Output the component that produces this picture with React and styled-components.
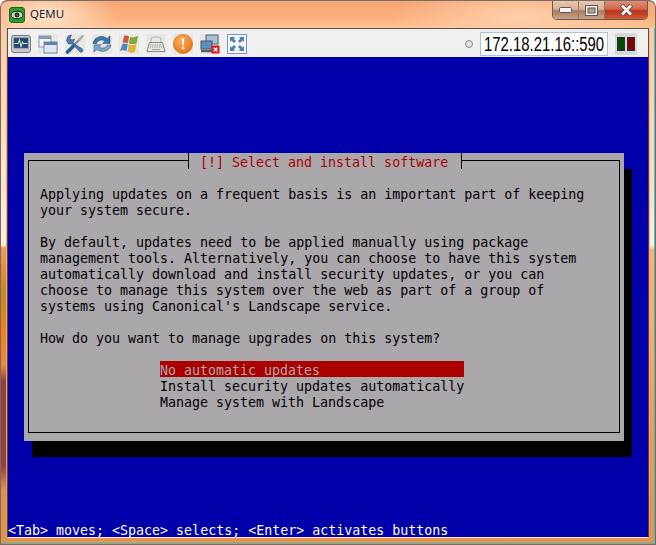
import React from "react";
import styled, { createGlobalStyle } from "styled-components";

const GlobalStyle = createGlobalStyle`
  html, body {
    margin: 0;
    padding: 0;
    background: #fff;
  }
`;

const LINES = [
  "Applying updates on a frequent basis is an important part of keeping",
  "your system secure.",
  "",
  "By default, updates need to be applied manually using package",
  "management tools. Alternatively, you can choose to have this system",
  "automatically download and install security updates, or you can",
  "choose to manage this system over the web as part of a group of",
  "systems using Canonical's Landscape service.",
  "",
  "How do you want to manage upgrades on this system?",
];

const OPTIONS = [
  "No automatic updates",
  "Install security updates automatically",
  "Manage system with Landscape",
];

export default function App() {
  return (
    <>
      <GlobalStyle />
      <Win>
        <TitleBar>
          <AppIcon>
            <svg width="16" height="16" viewBox="0 0 16 16">
              <rect x="0.5" y="0.5" width="15" height="15" rx="2.5" fill="#2f9a2c" stroke="#176a1c" />
              <ellipse cx="8" cy="8" rx="6" ry="3.8" fill="#c6d6c2" stroke="#16261c" strokeWidth="1" />
              <circle cx="8" cy="8" r="2.4" fill="#1b2a22" />
              <circle cx="8" cy="8" r="0.8" fill="#8a9a8c" />
            </svg>
          </AppIcon>
          <AppName>QEMU</AppName>
          <Caption>
            <CaptionButton>
              <svg width="13" height="6" viewBox="0 0 13 6">
                <rect x="0.5" y="0.5" width="12" height="5" rx="1" fill="#f2f3f6" stroke="#5c5a60" />
              </svg>
            </CaptionButton>
            <CaptionButton>
              <svg width="13" height="11" viewBox="0 0 13 11">
                <rect x="0.5" y="0.5" width="12" height="10" fill="#eef0f4" stroke="#5c5a60" />
                <rect x="3" y="3" width="7" height="5" fill="#c89c78" stroke="#5c5a60" />
              </svg>
            </CaptionButton>
            <CloseButton>
              <svg width="15" height="12" viewBox="0 0 15 12">
                <path d="M2.5 1 L12.5 11 M12.5 1 L2.5 11" stroke="#6c4a48" strokeWidth="4.4" />
                <path d="M3 1.5 L12 10.5 M12 1.5 L3 10.5" stroke="#f6f6f6" strokeWidth="2.6" />
              </svg>
            </CloseButton>
          </Caption>
        </TitleBar>
        <Toolbar>
          <IconGroup>
            <ToolIcon>
              <svg width="20" height="20" viewBox="0 0 20 20">
                <rect x="0.5" y="1.5" width="19" height="17" rx="2.5" fill="#c4c8cc" stroke="#7c8084" />
                <rect x="3" y="4" width="14" height="10" fill="#1f4a80" stroke="#4c5660" strokeWidth="0.6" />
                <path d="M3.5 9.5 H7 L8.5 6 L10 12.5 L11.5 8 L12.5 9.5 H16.5" fill="none" stroke="#d8e49a" strokeWidth="1.1" />
              </svg>
            </ToolIcon>
            <ToolIcon>
              <svg width="20" height="20" viewBox="0 0 20 20">
                <rect x="1" y="2" width="12" height="11" fill="#f2f4f6" stroke="#8a96a4" />
                <rect x="1" y="2" width="12" height="3" fill="#7c9cc0" />
                <rect x="6" y="8" width="13" height="11" fill="#dfe6ee" stroke="#76869a" />
                <rect x="6" y="8" width="13" height="3" fill="#5c84b0" />
              </svg>
            </ToolIcon>
            <ToolIcon>
              <svg width="20" height="20" viewBox="0 0 20 20">
                <path d="M7 13 L15 5" stroke="#8a949c" strokeWidth="2.4" />
                <path d="M14 6 L18 1.5" stroke="#a4acb4" strokeWidth="2.4" />
                <path d="M1.5 6.5 L3 2 L6.5 1 L5 4.5 L7 6 L9.5 5 L8 9 L17.5 15 A2 2 0 0 1 15 18 L7.5 10 L3.5 10 Z" fill="#4c7aa8" stroke="#2c5480" strokeWidth="0.6" />
                <path d="M2.5 18 L8 12.5" stroke="#2d5c90" strokeWidth="3.6" strokeLinecap="round" />
              </svg>
            </ToolIcon>
            <ToolIcon>
              <svg width="20" height="20" viewBox="0 0 20 20">
                <path d="M1 9.5 C2 3 10 0.5 15 4.5 L18 2 V9.5 H10.5 L13 7.2 C10 5 5.5 6 4.8 9.5 Z" fill="#3c78ac" stroke="#2a5480" strokeWidth="0.6" />
                <path d="M19 11 C18 17 10 19.5 5 15.5 L2 18 V10.8 H9.5 L7 13 C10 15 14.5 14 15.2 11 Z" fill="#7ca4c8" stroke="#3c6a96" strokeWidth="0.6" />
              </svg>
            </ToolIcon>
            <ToolIcon>
              <svg width="20" height="20" viewBox="0 0 20 20">
                <path d="M5 2 C7 1 8 2 10 2.4 L9 9 C7 8.4 5.5 8 3.6 9 Z" fill="#c8583c" />
                <path d="M11 3 C13.5 3.8 16 3.4 19 2 L17.6 9.4 C15 10.4 12.2 10.2 10 9.4 Z" fill="#7ca83c" />
                <path d="M3.4 10 C5.5 9 7 9.4 8.8 10 L7.6 17 C5.6 16.2 3.4 16 1 17 Z" fill="#4c86c8" />
                <path d="M9.8 10.4 C12 11.2 14.6 11.2 17.4 10.2 L16 18 C13.4 19 11 19 8.6 17.6 Z" fill="#dcb43c" />
              </svg>
            </ToolIcon>
            <ToolIcon>
              <svg width="20" height="20" viewBox="0 0 20 20">
                <path d="M5 9 V5 C5 3 8 3 10 3 S15 3 15 5 V9" fill="none" stroke="#b0b0ac" />
                <path d="M3.5 8.5 H16.5 L19 17.5 H1 Z" fill="#e8e8e4" stroke="#8c8c88" />
                <path d="M4 11 H16 M3.5 13 H16.5" stroke="#9c9c98" strokeDasharray="1.5 0.8" strokeWidth="1.2" />
                <path d="M6 15.5 H14" stroke="#9c9c98" strokeWidth="1.2" />
              </svg>
            </ToolIcon>
            <ToolIcon>
              <svg width="20" height="20" viewBox="0 0 20 20">
                <defs>
                  <radialGradient id="warn" cx="0.4" cy="0.3" r="0.8">
                    <stop offset="0" stopColor="#fbb060" />
                    <stop offset="1" stopColor="#e86a10" />
                  </radialGradient>
                </defs>
                <circle cx="10" cy="10" r="9.6" fill="url(#warn)" stroke="#d0650f" strokeWidth="0.6" />
                <path d="M8.8 4 H11.2 L10.8 11.5 H9.2 Z" fill="#fff6e8" />
                <circle cx="10" cy="14.2" r="1.4" fill="#fff6e8" />
              </svg>
            </ToolIcon>
            <ToolIcon>
              <svg width="20" height="20" viewBox="0 0 20 20">
                <rect x="6" y="1" width="12" height="9" fill="#a8c0d8" stroke="#555e68" />
                <rect x="1" y="7" width="11" height="8" fill="#5c90c0" stroke="#4c5660" />
                <path d="M1 17 H12" stroke="#555e68" strokeWidth="2.4" />
                <rect x="11.5" y="11.5" width="8" height="8" fill="#d81c1c" />
                <path d="M13.8 13.8 L17.2 17.2 M17.2 13.8 L13.8 17.2" stroke="#fff" strokeWidth="1.5" />
              </svg>
            </ToolIcon>
            <ToolIcon>
              <svg width="20" height="20" viewBox="0 0 20 20">
                <rect x="0.5" y="0.5" width="19" height="19" fill="#f4f6f8" stroke="#7c94b0" />
                <path d="M3 3 H8 L6.6 4.6 L9 7 L7 9 L4.6 6.6 L3 8 Z" fill="#4c80b4" />
                <path d="M17 3 H12 L13.4 4.6 L11 7 L13 9 L15.4 6.6 L17 8 Z" fill="#4c80b4" />
                <path d="M3 17 H8 L6.6 15.4 L9 13 L7 11 L4.6 13.4 L3 12 Z" fill="#4c80b4" />
                <path d="M17 17 H12 L13.4 15.4 L11 13 L13 11 L15.4 13.4 L17 12 Z" fill="#4c80b4" />
              </svg>
            </ToolIcon>
          </IconGroup>
          <Radio />
          <Address>
            <AddressText>172.18.21.16::590</AddressText>
          </Address>
          <Lights>
            <Light $color="#004c00" />
            <Light $color="#7c0000" />
          </Lights>
        </Toolbar>
        <Console>
          <Dialog>
            <DialogFrame>
              <DialogTitle>[!] Select and install software</DialogTitle>
              <DialogText>{LINES.map((line, i) => <TextLine key={i}>{line}</TextLine>)}</DialogText>
              <Menu>
                {OPTIONS.map((opt, i) => <MenuItem key={opt} $selected={i === 0}>{opt}</MenuItem>)}
              </Menu>
            </DialogFrame>
          </Dialog>
          <StatusLine>{"<Tab> moves; <Space> selects; <Enter> activates buttons"}</StatusLine>
        </Console>
      </Win>
    </>
  );
}

const Win = styled.div`
  box-sizing: border-box;
  width: 656px;
  height: 545px;
  padding: 0 7px 8px 7px;
  border-radius: 7px 7px 0 0;
  background:
    linear-gradient(to bottom, #fcc8a0 0, #fde0c8 140px, #fff0e2 245px, #e8a060 248px, #e88a40 270px, #c08a20 292px, #f08020 335px, #e88a40 365px, #904040 382px, #904040 465px, #e09050 490px, #e0964e 545px) 1px 0 / 5px 100% no-repeat,
    linear-gradient(to bottom, #fcc8a0 0, #fde0c8 190px, #fff0e4 245px, #fdb070 250px, #fcac68 330px, #e89c58 430px, #e0964e 545px) 650px 0 / 5px 100% no-repeat,
    linear-gradient(to bottom, #f8be94 0%, #f4b07c 45%, #e8a468 80%, #e0964e 100%);
  box-shadow: inset 0 0 0 1px #7a6a60, inset -1px -1px 0 1px rgba(64, 184, 208, 0.9);
  display: flex;
  flex-direction: column;
  overflow: hidden;
`;
const TitleBar = styled.div`
  box-sizing: border-box;
  height: 28px;
  margin: 0 -6px;
  padding: 0 7px 0 8px;
  flex: none;
  display: flex;
  align-items: flex-start;
  border-radius: 7px 7px 0 0;
  background:
    radial-gradient(ellipse 70px 30px at 46px 14px, #ffe4cc 0%, rgba(255, 228, 204, 0) 100%),
    radial-gradient(ellipse 130px 30px at 520px 16px, #ffd0ac 0%, rgba(255, 208, 172, 0) 100%),
    linear-gradient(to bottom, #f5a878, #fbb07c 60%, #ffc498);
  border-top: 1px solid #7a6a60;
`;
const AppIcon = styled.div`
  width: 16px;
  height: 16px;
  margin-top: 6px;
  flex: none;
  svg {
    display: block;
  }
`;
const AppName = styled.div`
  margin: 3px 0 0 5px;
  font: 11.5px/20px "Open Sans", sans-serif;
  color: #04101c;
`;
const Caption = styled.div`
  margin-left: auto;
  height: 18px;
  display: flex;
  border: 1px solid #6d5b52;
  border-top: 0;
  border-radius: 0 0 5px 5px;
  overflow: hidden;
`;
const CaptionButton = styled.div`
  width: 25px;
  height: 18px;
  display: flex;
  align-items: center;
  justify-content: center;
  border-right: 1px solid #8c7a6c;
  background: linear-gradient(to bottom, #e8c8ae 0%, #d8b294 45%, #ab7e60 55%, #c9a284 100%);
`;
const CloseButton = styled.div`
  width: 42px;
  height: 18px;
  display: flex;
  align-items: center;
  justify-content: center;
  background: linear-gradient(to bottom, #de9278 0%, #d0664a 45%, #b8331a 55%, #d05c34 100%);
`;
const Toolbar = styled.div`
  box-sizing: border-box;
  height: 29px;
  flex: none;
  display: flex;
  align-items: center;
  padding: 2px 11px 0 3px;
  background: #f0f0f0;
  border: 1px solid #5a5048;
  border-bottom: 0;
`;
const IconGroup = styled.div`
  display: flex;
  gap: 7px;
`;
const ToolIcon = styled.div`
  width: 20px;
  height: 20px;
  background: #e9e8e0;
  svg {
    display: block;
  }
`;
const Radio = styled.div`
  box-sizing: border-box;
  width: 8px;
  height: 8px;
  margin-left: auto;
  border-radius: 50%;
  background: #e4e4e4;
  border: 1px solid #8a8a8a;
`;
const Address = styled.div`
  box-sizing: border-box;
  width: 128px;
  height: 24px;
  margin-left: 7px;
  padding-left: 3px;
  background: #fff;
  border: 1px solid #a9c4dc;
  overflow: hidden;
`;
const AddressText = styled.div`
  font: 20px/22px "Liberation Sans", sans-serif;
  color: #000;
  white-space: pre;
  transform: scaleX(0.745);
  transform-origin: left top;
`;
const Lights = styled.div`
  box-sizing: border-box;
  width: 22px;
  height: 22px;
  margin-left: 7px;
  padding: 4px 2px;
  display: flex;
  gap: 2px;
  background: #d8d8d8;
`;
const Light = styled.div`
  width: 8px;
  background: ${(p) => p.$color};
  border: 1px solid #303030;
  box-sizing: border-box;
`;
const Console = styled.div`
  box-sizing: border-box;
  width: 640px;
  height: 480px;
  margin-left: 1px;
  flex: none;
  display: flex;
  flex-direction: column;
  padding-top: 96px;
  background: #0000aa;
  box-shadow: -1px 0 0 #5a4436, 1px 0 0 #5a4436, 0 1px 0 #fce0c8;
  font: 13.3px/20px "DejaVu Sans Mono", "Liberation Mono", monospace;
  white-space: pre;
`;
const Dialog = styled.div`
  box-sizing: border-box;
  width: 600px;
  height: 288px;
  margin-left: 16px;
  padding: 7px 4px 8px 4px;
  background: #aaa8aa;
  box-shadow: 8px 16px 0 #000;
  color: #000;
`;
const DialogFrame = styled.div`
  box-sizing: border-box;
  height: 100%;
  display: flex;
  flex-direction: column;
  border: 1px solid #000;
  padding-left: 11px;
`;
const DialogTitle = styled.div`
  align-self: flex-start;
  height: 16px;
  margin: -8px 0 0 148px;
  padding: 0 13px 0 11px;
  background: #aaa8aa;
  border-left: 1px solid #000;
  border-right: 1px solid #000;
  color: #aa0000;
`;
const DialogText = styled.div`
  margin-top: 16px;
`;
const TextLine = styled.div`
  height: 16px;
`;
const Menu = styled.div`
  margin: 16px 0 0 120px;
  width: 304px;
`;
const MenuItem = styled.div`
  height: 16px;
  background: ${(p) => (p.$selected ? "#aa0000" : "transparent")};
  color: ${(p) => (p.$selected ? "#aaa8aa" : "#000")};
`;
const StatusLine = styled.div`
  height: 16px;
  margin-top: auto;
  color: #fff;
`;
